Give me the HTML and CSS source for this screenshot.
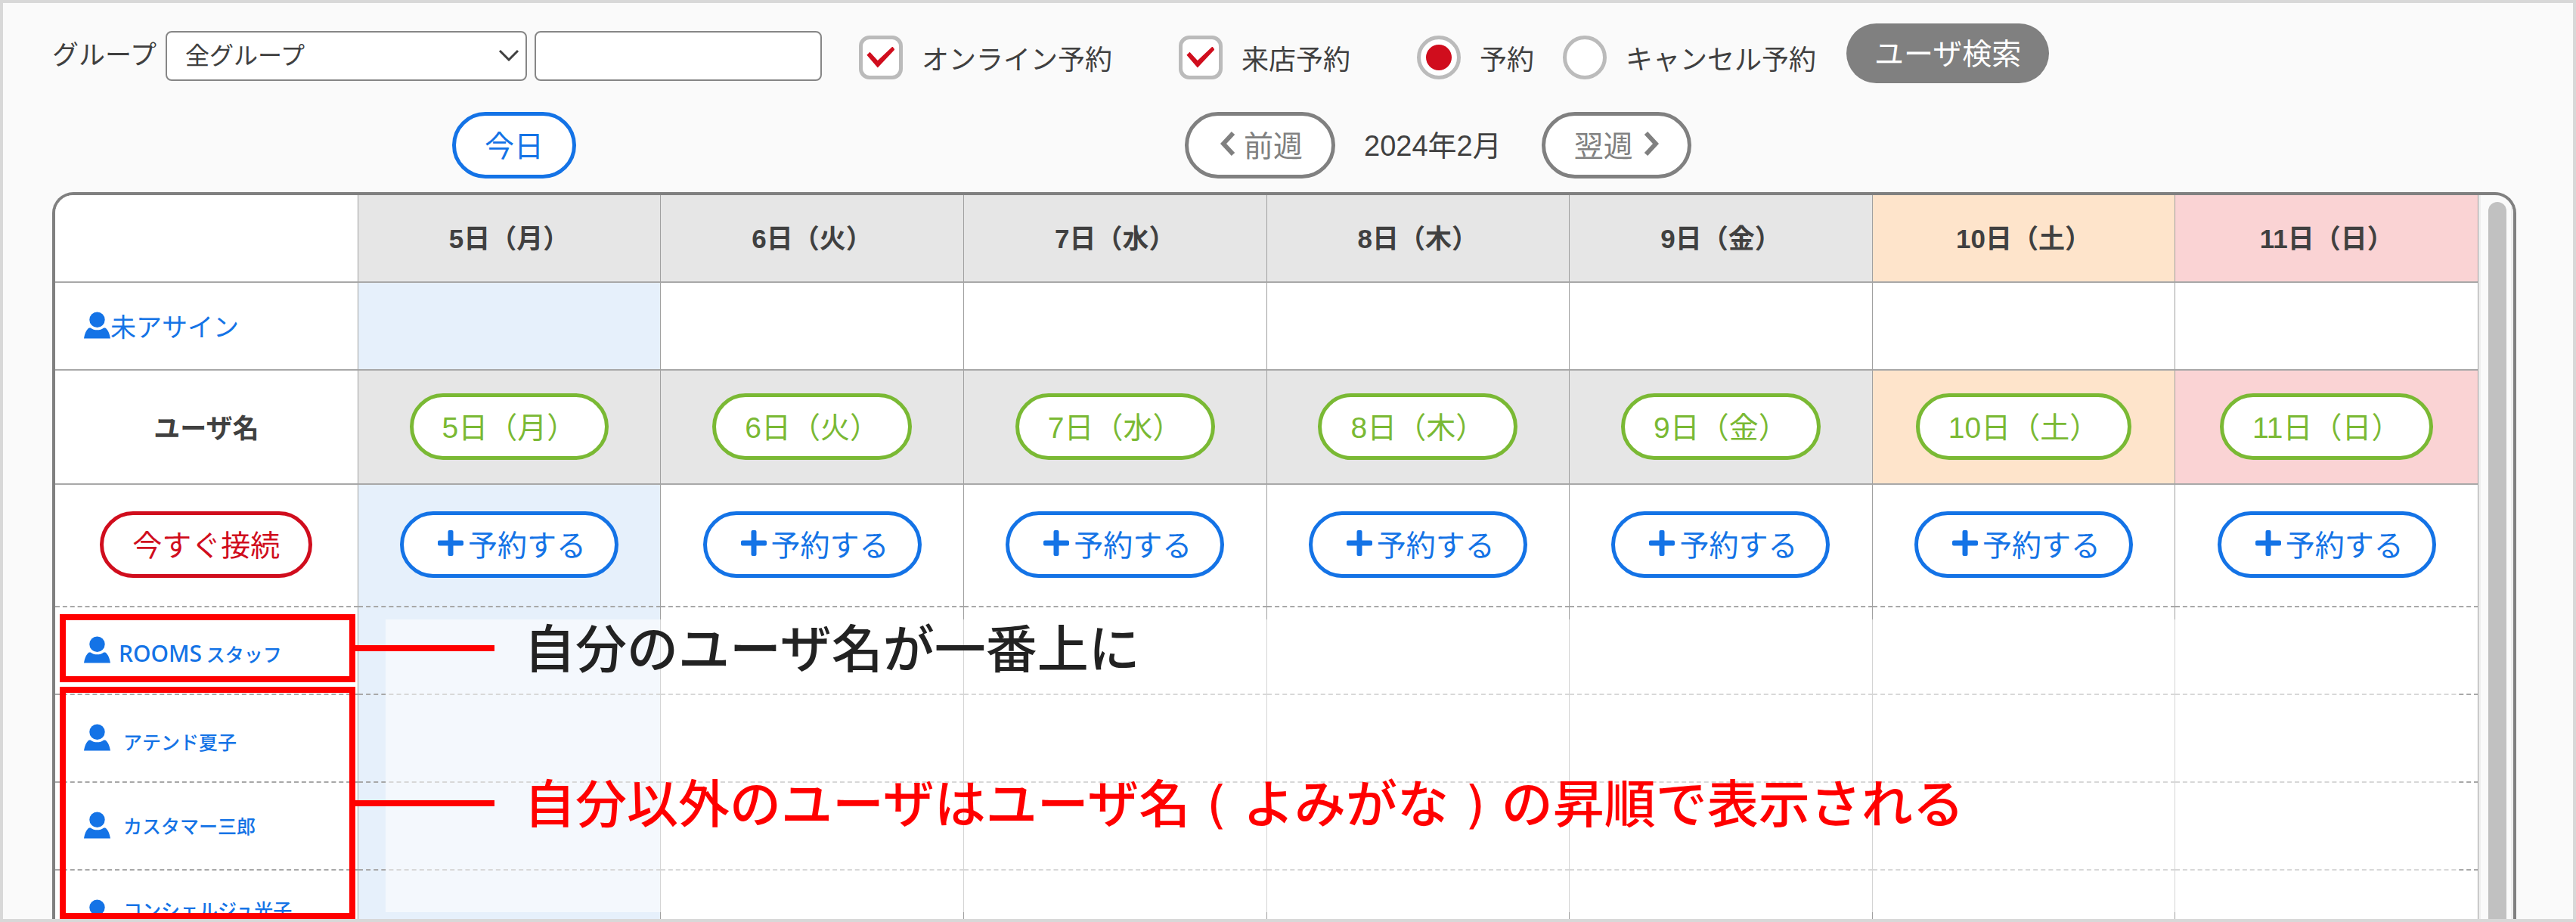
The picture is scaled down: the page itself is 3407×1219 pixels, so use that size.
FILE: index.html
```html
<!DOCTYPE html>
<html lang="ja">
<head>
    <meta charset="UTF-8">
    <meta name="viewport" content="width=device-width, initial-scale=1.0">
    <title>予約カレンダー</title>
    <link rel="stylesheet" href="styles.css">
</head>
<body>
    <svg class="defs" aria-hidden="true">
        <symbol id="user" viewBox="0 0 36 36">
            <circle cx="18" cy="10.500" r="10.500"/>
            <path d="M0 36C1 30 3 24 7 21.500H9C14 25.500 22 25.500 27 21.500H29C33 24 35 30 36 36Z"/>
        </symbol>
        <symbol id="plus" viewBox="0 0 34 34">
            <path d="M13.500 2a2 2 0 0 1 2-2h3a2 2 0 0 1 2 2v11.500H32a2 2 0 0 1 2 2v3a2 2 0 0 1-2 2H20.500V32a2 2 0 0 1-2 2h-3a2 2 0 0 1-2-2V20.500H2a2 2 0 0 1-2-2v-3a2 2 0 0 1 2-2h11.500z"/>
        </symbol>
        <symbol id="prev" viewBox="0 0 20 34">
            <path d="M17 3L4 17L17 31" fill="none" stroke="currentColor" stroke-width="6"/>
        </symbol>
        <symbol id="next" viewBox="0 0 20 34">
            <path d="M3 3L16 17L3 31" fill="none" stroke="currentColor" stroke-width="6"/>
        </symbol>
    </svg>
    <div class="page">
        <form class="search">
            <label class="group-label" for="group">グループ</label>
            <div class="select-box">
                <select id="group" name="group">
                    <option>全グループ</option>
                </select>
                <svg class="arrow" viewBox="0 0 28 16"><path d="M2 2L14 14L26 2" fill="none" stroke="currentColor" stroke-width="3"/></svg>
            </div>
            <input class="keyword" type="text" name="keyword" aria-label="ユーザ名">
            <label class="option online"><input type="checkbox" name="online" checked>オンライン予約</label>
            <label class="option visit"><input type="checkbox" name="visit" checked>来店予約</label>
            <label class="option booked"><input type="radio" name="status" checked>予約</label>
            <label class="option canceled"><input type="radio" name="status">キャンセル予約</label>
            <button class="search-button" type="button">ユーザ検索</button>
        </form>

        <div class="week-nav">
            <button class="pill blue today" type="button">今日</button>
            <button class="pill gray" type="button"><svg class="icon-prev"><use href="#prev"/></svg>前週</button>
            <span class="month">2024年2月</span>
            <button class="pill gray" type="button">翌週<svg class="icon-next"><use href="#next"/></svg></button>
        </div>

        <div class="calendar">
            <table>
                <thead>
                    <tr class="dates">
                        <th></th>
                        <th>5日（月）</th>
                        <th>6日（火）</th>
                        <th>7日（水）</th>
                        <th>8日（木）</th>
                        <th>9日（金）</th>
                        <th class="sat">10日（土）</th>
                        <th class="sun">11日（日）</th>
                    </tr>
                </thead>
                <tbody>
                    <tr class="unassigned">
                        <td><a class="user" href="#"><svg><use href="#user"/></svg>未アサイン</a></td>
                        <td class="current"></td><td></td><td></td><td></td><td></td><td></td><td></td>
                    </tr>
                    <tr class="dates links">
                        <th>ユーザ名</th>
                        <th><button class="pill green" type="button">5日（月）</button></th>
                        <th><button class="pill green" type="button">6日（火）</button></th>
                        <th><button class="pill green" type="button">7日（水）</button></th>
                        <th><button class="pill green" type="button">8日（木）</button></th>
                        <th><button class="pill green" type="button">9日（金）</button></th>
                        <th class="sat"><button class="pill green" type="button">10日（土）</button></th>
                        <th class="sun"><button class="pill green" type="button">11日（日）</button></th>
                    </tr>
                    <tr class="reserve dashed">
                        <td><button class="pill red" type="button">今すぐ接続</button></td>
                        <td class="current"><button class="pill blue" type="button"><svg class="icon-plus"><use href="#plus"/></svg>予約する</button></td>
                        <td><button class="pill blue" type="button"><svg class="icon-plus"><use href="#plus"/></svg>予約する</button></td>
                        <td><button class="pill blue" type="button"><svg class="icon-plus"><use href="#plus"/></svg>予約する</button></td>
                        <td><button class="pill blue" type="button"><svg class="icon-plus"><use href="#plus"/></svg>予約する</button></td>
                        <td><button class="pill blue" type="button"><svg class="icon-plus"><use href="#plus"/></svg>予約する</button></td>
                        <td><button class="pill blue" type="button"><svg class="icon-plus"><use href="#plus"/></svg>予約する</button></td>
                        <td><button class="pill blue" type="button"><svg class="icon-plus"><use href="#plus"/></svg>予約する</button></td>
                    </tr>
                    <tr class="staff dashed">
                        <td><a class="user" href="#"><svg><use href="#user"/></svg><span><span class="latin">ROOMS</span> スタッフ</span></a></td>
                        <td class="current"></td><td></td><td></td><td></td><td></td><td></td><td></td>
                    </tr>
                    <tr class="staff others dashed">
                        <td><a class="user" href="#"><svg><use href="#user"/></svg><span>アテンド夏子</span></a></td>
                        <td class="current"></td><td></td><td></td><td></td><td></td><td></td><td></td>
                    </tr>
                    <tr class="staff others dashed">
                        <td><a class="user middle" href="#"><svg><use href="#user"/></svg><span>カスタマー三郎</span></a></td>
                        <td class="current"></td><td></td><td></td><td></td><td></td><td></td><td></td>
                    </tr>
                    <tr class="staff others dashed">
                        <td><a class="user top" href="#"><svg><use href="#user"/></svg><span>コンシェルジュ光子</span></a></td>
                        <td class="current"></td><td></td><td></td><td></td><td></td><td></td><td></td>
                    </tr>
                </tbody>
            </table>
            <div class="scrollbar"><div class="thumb"></div></div>

            <!-- callouts over the user list -->
            <div class="veil"></div>
            <div class="frame frame-self"></div>
            <div class="frame frame-others"></div>
            <p class="note note-self">自分のユーザ名が一番上に</p>
            <p class="note note-others">自分以外のユーザはユーザ名 ( よみがな ) の昇順で表示される</p>
        </div>
    </div>
</body>
</html>
```

FILE: styles.css
```css
* {
    margin: 0;
    padding: 0;
    box-sizing: border-box;
}
body {
    font-family: "Liberation Sans", "Noto Sans CJK JP", sans-serif;
    font-size: 35px;
    color: #404040;
    background-color: #fafafa;
}
button, input, select {
    font: inherit;
    color: inherit;
}
svg {
    fill: currentColor;
}
.defs {
    display: none;
}
.page {
    display: flex;
    flex-direction: column;
    height: 100vh;
    border: 4px solid #d8d8d8;
    padding: 26px 75px 0 65px;
    overflow: hidden;
}

/* search form */
.search {
    display: flex;
    align-items: center;
    height: 88px;
}
.group-label {
    padding-bottom: 10px;
}
.select-box {
    position: relative;
    margin: 0 10px 0 12px;
}
select, .keyword {
    display: block;
    height: 66px;
    border: 2px solid #868686;
    border-radius: 8px;
    background-color: #fff;
}
select {
    appearance: none;
    width: 478px;
    padding: 0 24px;
    font-size: 32px;
}
.arrow {
    position: absolute;
    right: 10px;
    top: 24px;
    width: 28px;
    height: 16px;
    pointer-events: none;
}
.keyword {
    width: 380px;
    padding: 0 16px;
}
.option {
    display: flex;
    align-items: center;
    gap: 25px;
    margin-top: 3px;
    font-size: 36px;
}
.option input {
    appearance: none;
    display: grid;
    place-items: center;
    width: 58px;
    height: 58px;
    border: 5px solid #bbb;
    border-radius: 14px;
    background-color: #fff;
}
.option input[type="radio"] {
    border-radius: 50%;
}
.option input[type="checkbox"]:checked::before {
    content: "";
    width: 37px;
    height: 28px;
    background-color: #d00d1d;
    clip-path: polygon(0 40%, 11% 26%, 39% 66%, 92% 0, 100% 14%, 39% 100%);
}
.option input[type="radio"]:checked::before {
    content: "";
    width: 34px;
    height: 34px;
    border-radius: 50%;
    background-color: #d00d1d;
}
.online {
    margin-left: 49px;
}
.visit, .booked {
    margin-left: 88px;
}
.canceled {
    margin-left: 38px;
}
.search-button {
    height: 79px;
    margin: 0 0 8px 40px;
    padding: 0 37px 4px;
    border: none;
    border-radius: 40px;
    font-size: 39px;
    background-color: #808080;
    color: #fff;
}

/* pill buttons */
.pill {
    display: inline-flex;
    align-items: center;
    justify-content: center;
    height: 88px;
    padding: 0 38px 4px;
    border: 5px solid currentColor;
    border-radius: 44px;
    background-color: #fff;
    font-size: 39px;
    font-weight: normal;
    white-space: nowrap;
}
.blue {
    color: #1473e6;
}
.gray {
    color: #808080;
}
.green {
    color: #7ab934;
}
.red {
    color: #d00d1d;
}
.icon-plus {
    width: 34px;
    height: 34px;
    margin: 0 6px 0 7px;
}
.icon-prev, .icon-next {
    width: 20px;
    height: 34px;
    margin: 0 11px 0 4px;
}
.icon-next {
    margin: 0 0 0 14px;
}

.week-nav {
    display: flex;
    align-items: center;
    margin-top: 30px;
    padding-left: 529px;
}
.today {
    margin-right: 805px;
}
.month {
    margin: 0 53px 6px 38px;
    font-size: 38px;
}

/* calendar */
.calendar {
    position: relative;
    display: flex;
    flex: 1;
    align-items: flex-start;
    min-height: 0;
    margin-top: 18px;
    border: 4px solid #808080;
    border-bottom: none;
    border-radius: 28px 28px 0 0;
    background-color: #fafafa;
    overflow: hidden;
}
table {
    width: calc(100% - 46px);
    table-layout: fixed;
    border-collapse: separate;
    border-spacing: 0;
    background-color: #fff;
}
th, td {
    height: 116px;
    padding-bottom: 2px;
    border-right: 1px solid #a0a0a0;
    border-bottom: 2px solid #a8a8a8;
    text-align: center;
    vertical-align: middle;
}
thead th {
    padding-bottom: 6px;
}
.dates th + th {
    background-color: #e6e6e6;
}
.dates .sat.sat {
    background-color: #fee4cb;
}
.dates .sun.sun {
    background-color: #fad3d4;
}
.links th {
    height: 151px;
}
.reserve td {
    height: 162px;
}
.dashed td {
    border-bottom-style: dashed;
}
.current {
    background-color: #e6f0fb;
}
.user {
    display: flex;
    align-items: center;
    padding-left: 38px;
    font-size: 34px;
    color: #1473e6;
    text-decoration: none;
    white-space: nowrap;
}
.user svg {
    flex: none;
    width: 35px;
    height: 36px;
}
.staff .user {
    align-items: flex-end;
    gap: 11px;
    font-family: "Noto Sans CJK JP", sans-serif;
    font-size: 25px;
    font-weight: 500;
    line-height: 26px;
}
.others .user {
    gap: 17px;
}
.others .middle {
    align-items: center;
}
.others .top {
    align-items: flex-start;
}
.latin {
    font-family: "Noto Sans", sans-serif;
    font-size: 30px;
}
.scrollbar {
    flex: 1;
    align-self: stretch;
    padding: 9px 6px 0 10px;
    border: solid #eee;
    border-width: 0 3px;
}
.thumb {
    height: 1100px;
    border-radius: 12px;
    background-color: #c1c1c1;
}

/* callouts */
.veil {
    position: absolute;
    left: 437px;
    right: 74px;
    top: 561px;
    bottom: 9px;
    background-color: rgba(255, 255, 255, 0.55);
}
.frame {
    position: absolute;
    left: 6px;
    width: 391px;
    border: 8px solid #f00;
}
.frame::after {
    content: "";
    position: absolute;
    left: 100%;
    top: 50%;
    width: 192px;
    height: 8px;
    margin-top: -4px;
    background-color: #f00;
}
.frame-self {
    top: 554px;
    height: 90px;
}
.frame-others {
    top: 650px;
    bottom: 0;
}
.note {
    position: absolute;
    left: 620px;
    font-family: "DejaVu Sans", "Noto Sans CJK JP", sans-serif;
    font-size: 68px;
    font-weight: 500;
    line-height: 80px;
    white-space: nowrap;
}
.note-self {
    top: 562px;
    color: #222;
}
.note-others {
    top: 767px;
    color: #f00;
}
```
